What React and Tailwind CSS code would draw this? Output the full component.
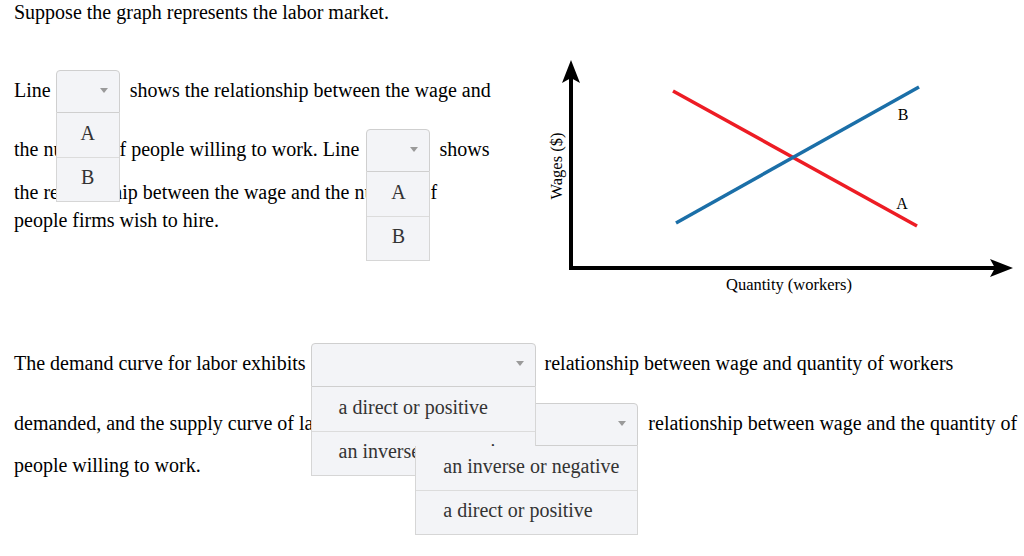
import React from 'react';

function Dropdown({ className, options, center, menuZ }) {
  return (
    <div className={`relative shrink-0 ${className}`}>
      <div className="h-full rounded-t-[4px] border border-[#cfcfcf] bg-[#f3f4f7] flex items-center justify-end pr-[11px]">
        <span className="mb-[3px] border-x-[4px] border-t-[5px] border-x-transparent border-t-[#9a9a9a]" />
      </div>
      <div className={`absolute left-0 top-full w-full border-x border-b border-[#d6d6d6] bg-[#f3f4f7] text-[#333] ${menuZ}`}>
        {options.map((o, i) => (
          <div
            key={o}
            className={`h-[44px] flex items-center pb-[5px] ${i > 0 ? 'border-t border-[#dcdcdc]' : ''} ${center ? 'justify-center' : 'pl-[27px]'}`}
          >
            {o}
          </div>
        ))}
      </div>
    </div>
  );
}

function Graph() {
  const font = 'Liberation Serif, Times New Roman, serif';
  return (
    <svg width="484" height="250" viewBox="540 50 484 250" className="shrink-0 mt-[26px]">
      {/* axes */}
      <line x1="571" y1="270" x2="571" y2="76" stroke="#000" strokeWidth="4" />
      <path d="M571 60 L580 83 L571 78 L562 83 Z" fill="#000" />
      <line x1="569" y1="268" x2="997" y2="268" stroke="#000" strokeWidth="4" />
      <path d="M1013 268 L990 259 L995 268 L990 277 Z" fill="#000" />
      {/* curves */}
      <line x1="673" y1="91" x2="917" y2="226" stroke="#ed1c24" strokeWidth="3.5" />
      <line x1="676" y1="223" x2="919" y2="87" stroke="#1b6fa8" strokeWidth="3.5" />
      <text x="903" y="120" fontSize="16" textAnchor="middle" fontFamily={font}>B</text>
      <text x="902" y="209" fontSize="16" textAnchor="middle" fontFamily={font}>A</text>
      <text x="789" y="290" fontSize="16.5" textAnchor="middle" fontFamily={font}>Quantity (workers)</text>
      <text transform="translate(562 166) rotate(-90)" fontSize="16.5" textAnchor="middle" fontFamily={font}>
        Wages ($)
      </text>
    </svg>
  );
}

export default function App() {
  return (
    <div className="min-h-[556px] overflow-hidden bg-white pl-[14px] text-[20px] leading-[24px] text-black font-['Liberation_Serif','Times_New_Roman',serif]">
      <p className="h-[24px]">Suppose the graph represents the labor market.</p>

      <div className="flex">
        {/* left question text */}
        <div className="w-[526px] shrink-0 pt-[46px] whitespace-nowrap">
          <div className="flex items-center h-[43px]">
            <span className="mb-[4px]">Line</span>
            <Dropdown className="w-[64px] h-[43px] ml-[5px] mr-[10px]" options={['A', 'B']} center menuZ="z-10" />
            <span className="mb-[4px]">shows the relationship between the wage and</span>
          </div>
          <div className="flex items-center h-[43px] mt-[16px]">
            <span className="mb-[4px]">the number of people willing to work. Line</span>
            <Dropdown className="w-[64px] h-[43px] ml-[7px] mr-[9px]" options={['A', 'B']} center menuZ="z-10" />
            <span className="mb-[4px]">shows</span>
          </div>
          <p className="h-[28px] leading-[28px] mt-[6px]">the relationship between the wage and the number of</p>
          <p className="h-[28px] leading-[28px]">people firms wish to hire.</p>
        </div>

        <Graph />
      </div>

      {/* second question */}
      <div className="mt-[43px] whitespace-nowrap">
        <div className="flex items-center h-[44px]">
          <span className="mb-[4px]">The demand curve for labor exhibits</span>
          <Dropdown
            className="w-[225px] h-[44px] ml-[5px] mr-[9px]"
            options={['a direct or positive', 'an inverse or negative']}
            menuZ="z-10"
          />
          <span className="mb-[4px]">relationship between wage and quantity of workers</span>
        </div>
        <div className="flex items-center h-[43px] mt-[16px]">
          <span className="mb-[4px]">demanded, and the supply curve of labor exhibits</span>
          <Dropdown
            className="w-[223px] h-[43px] ml-[7px] mr-[10px]"
            options={['an inverse or negative', 'a direct or positive']}
            menuZ="z-20"
          />
          <span className="mb-[4px]">relationship between wage and the quantity of</span>
        </div>
        <p className="h-[28px] leading-[28px] mt-[5px]">people willing to work.</p>
      </div>
    </div>
  );
}
